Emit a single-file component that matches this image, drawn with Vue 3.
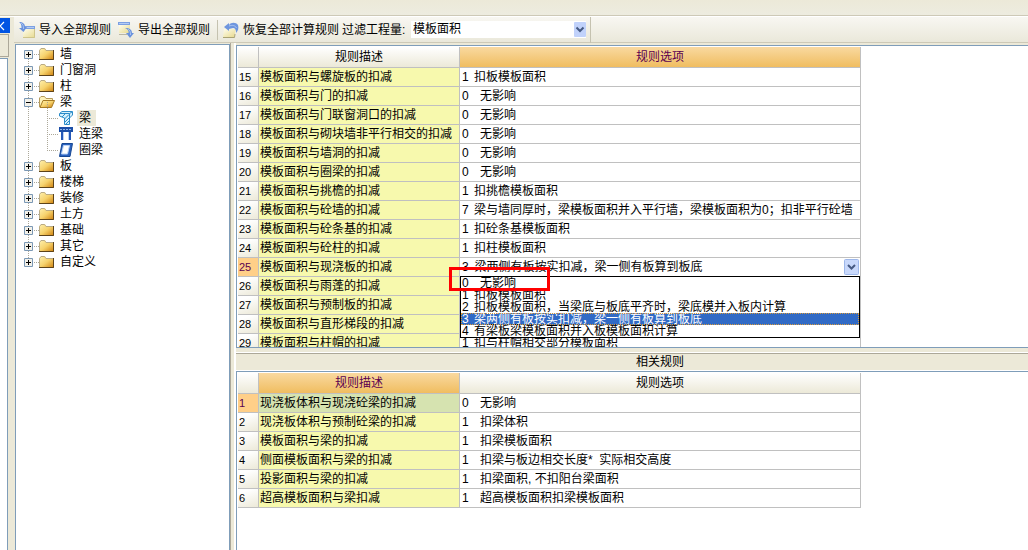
<script setup>
import { ref } from 'vue'

const tree = [
  { name: '墙' },
  { name: '门窗洞' },
  { name: '柱' },
  {
    name: '梁',
    open: true,
    children: [
      { name: '梁', icon: 'beam', selected: true },
      { name: '连梁', icon: 'link' },
      { name: '圈梁', icon: 'ring' }
    ]
  },
  { name: '板' },
  { name: '楼梯' },
  { name: '装修' },
  { name: '土方' },
  { name: '基础' },
  { name: '其它' },
  { name: '自定义' }
]

const rules = [
  { id: 15, desc: '模板面积与螺旋板的扣减', code: 1, text: '扣板模板面积' },
  { id: 16, desc: '模板面积与门的扣减', code: 0, wide: true, text: '无影响' },
  { id: 17, desc: '模板面积与门联窗洞口的扣减', code: 0, wide: true, text: '无影响' },
  { id: 18, desc: '模板面积与砌块墙非平行相交的扣减', code: 0, wide: true, text: '无影响' },
  { id: 19, desc: '模板面积与墙洞的扣减', code: 0, wide: true, text: '无影响' },
  { id: 20, desc: '模板面积与圈梁的扣减', code: 0, wide: true, text: '无影响' },
  { id: 21, desc: '模板面积与挑檐的扣减', code: 1, text: '扣挑檐模板面积' },
  { id: 22, desc: '模板面积与砼墙的扣减', code: 7, text: '梁与墙同厚时，梁模板面积并入平行墙，梁模板面积为0；扣非平行砼墙' },
  { id: 23, desc: '模板面积与砼条基的扣减', code: 1, text: '扣砼条基模板面积' },
  { id: 24, desc: '模板面积与砼柱的扣减', code: 1, text: '扣柱模板面积' },
  { id: 25, desc: '模板面积与现浇板的扣减', editing: true },
  { id: 26, desc: '模板面积与雨蓬的扣减' },
  { id: 27, desc: '模板面积与预制板的扣减' },
  { id: 28, desc: '模板面积与直形梯段的扣减' },
  { id: 29, desc: '模板面积与柱帽的扣减', code: 1, text: '扣与柱帽相交部分模板面积' }
]

const options = [
  { code: 0, wide: true, text: '无影响' },
  { code: 1, text: '扣板模板面积' },
  { code: 2, text: '扣板模板面积，当梁底与板底平齐时，梁底模并入板内计算' },
  { code: 3, text: '梁两侧有板按实扣减，梁一侧有板算到板底' },
  { code: 4, text: '有梁板梁模板面积并入板模板面积计算' }
]

const related = [
  { id: 1, desc: '现浇板体积与现浇砼梁的扣减', code: 0, text: '无影响' },
  { id: 2, desc: '现浇板体积与预制砼梁的扣减', code: 1, text: '扣梁体积' },
  { id: 3, desc: '模板面积与梁的扣减', code: 1, text: '扣梁模板面积' },
  { id: 4, desc: '侧面模板面积与梁的扣减', code: 1, text: '扣梁与板边相交长度*\u00a0\u00a0实际相交高度' },
  { id: 5, desc: '投影面积与梁的扣减', code: 1, text: '扣梁面积,\u00a0不扣阳台梁面积' },
  { id: 6, desc: '超高模板面积与梁扣减', code: 1, text: '超高模板面积扣梁模板面积' }
]

const quantity = ref('模板面积')
const chosen = ref(3)
</script>

<template>
  <div class="app">
    <svg class="defs" aria-hidden="true">
      <defs>
        <linearGradient id="gold" x1="0" y1="0" x2="1" y2="1">
          <stop offset="0" stop-color="#fff3b4" />
          <stop offset="0.5" stop-color="#f6d26c" />
          <stop offset="1" stop-color="#cc7c08" />
        </linearGradient>
        <linearGradient id="sheet" x1="0" y1="0" x2="1" y2="1">
          <stop offset="0" stop-color="#fffdee" />
          <stop offset="1" stop-color="#e6d98c" />
        </linearGradient>
      </defs>
    </svg>
    <div class="top-strip"></div>
    <div class="main">
      <aside class="dock">
        <button class="dock-close" aria-label="收起">
          <svg width="10" height="15" viewBox="0 0 10 15"><path d="M4 4L0 8L4 12" fill="none" stroke="#fff" stroke-width="1.2" /></svg>
        </button>
        <div class="dock-tab"></div>
        <div class="dock-body"></div>
      </aside>
      <div class="work">
        <div class="toolbar">
          <button class="tool">
            <svg width="16" height="16" viewBox="0 0 16 16">
              <path d="M4 7H16V16H4Z" fill="url(#sheet)" />
              <path d="M4 15.500H15.500V7" fill="none" stroke="#cfc58c" />
              <path d="M4 4H16V7H4Z" fill="#7ca0e2" />
              <path d="M6 5H15V6H6Z" fill="#b4cbf4" />
              <path d="M0 0C4 0 6 2 6 5H8L4.500 10L0 6H2.500C2.500 3 2 1 0 0Z" fill="#6a92dd" />
              <path d="M2 1C4 2 4.500 4 4.500 7" fill="none" stroke="#a9c4f2" />
            </svg>
            <span>导入全部规则</span>
          </button>
          <button class="tool">
            <svg width="16" height="16" viewBox="0 0 16 16">
              <path d="M1 3H12V11H1Z" fill="url(#sheet)" />
              <path d="M0 0H12V3H0Z" fill="#7ca0e2" />
              <path d="M1 1H11V2H1Z" fill="#b4cbf4" />
              <path d="M1 12.500H9" stroke="#b9b6a4" />
              <path d="M7 6C12 6 14 8 14 11H16L12 16L8 11H10.500C11 9 10 7 7 6Z" fill="#6a92dd" />
              <path d="M10 7C12 8 12.500 10 12.500 13" fill="none" stroke="#a9c4f2" />
            </svg>
            <span>导出全部规则</span>
          </button>
          <span class="divider"></span>
          <button class="tool last">
            <svg width="16" height="16" viewBox="0 0 16 16">
              <path d="M1 7H13L11 15H0Z" fill="url(#sheet)" />
              <path d="M0 15.500H11.500L12 12" fill="none" stroke="#a9a274" />
              <path d="M1 5L6 1V3C8 0 13 0 15 3C16 6 15 9 13 11C13.500 8 12 6 10 6L6 7V9Z" fill="#6f96de" />
              <path d="M6 4C9 3 12 3 13.500 6" fill="none" stroke="#a9c4f2" />
            </svg>
            <span>恢复全部计算规则</span>
          </button>
          <label class="filter-label" for="quantity">过滤工程量:</label>
          <div class="filter">
            <select id="quantity" v-model="quantity">
              <option>模板面积</option>
            </select>
            <svg class="arrow" viewBox="0 0 12 15" width="12" height="15">
              <rect width="12" height="15" rx="1" fill="#c1d2fb" />
              <path d="M2.500 5.500L6 9L9.500 5.500" fill="none" stroke="#465a83" stroke-width="2" />
            </svg>
          </div>
        </div>
        <div class="content">
          <nav class="tree" aria-label="构件">
            <ul>
              <li v-for="node in tree" :key="node.name" class="node">
                <div class="line">
                  <svg width="9" height="9" viewBox="0 0 9 9">
                    <path d="M.5 .5H8.500V8.500H.5Z" fill="#f3f1e9" stroke="#7b98b5" />
                    <path :d="node.open ? 'M2 4.500H7' : 'M2 4.500H7M4.500 2V7'" stroke="#000" />
                  </svg>
                  <span class="dots"></span>
                  <svg v-if="node.open" width="16" height="12" viewBox="0 0 16 12">
                    <path d="M.5 11V2L2 .5H5.500L7 2.500H13.500V5" fill="#fff3ba" stroke="#b59a5c" />
                    <path d="M1 11.500L4 4.500H15.500L12.500 11.500Z" fill="url(#gold)" stroke="#a57a24" />
                  </svg>
                  <svg v-else width="16" height="12" viewBox="0 0 16 12">
                    <path d="M0 2H1L2 0H6L7 2H15V12H0Z" fill="url(#gold)" />
                    <path d="M.5 11V2.500L2 .5H5.500L7 2.500H14" fill="none" stroke="#b9ab86" />
                    <path d="M0 11.500H14.500V2" fill="none" stroke="#5c431a" />
                  </svg>
                  <span class="name">{{ node.name }}</span>
                </div>
                <ul v-if="node.children" class="children">
                  <li v-for="child in node.children" :key="child.name" class="child">
                    <span class="child-dots"></span>
                    <svg v-if="child.icon === 'beam'" width="14" height="14" viewBox="0 0 14 14">
                      <path d="M.5 2.500L3 .5H13.500V4L10.500 7V13.500H5.500V7L.5 5Z" fill="#d6f1fc" stroke="#2c8cc9" />
                      <path d="M1 2.500H10.500L13 1M10.500 2.500V7M3 6L6 3M5.500 8L10 3.500M6 11L10 7M7 13L10 10" fill="none" stroke="#2c8cc9" />
                    </svg>
                    <svg v-else-if="child.icon === 'link'" width="14" height="14" viewBox="0 0 14 14">
                      <path d="M0 0H14V5H0Z" fill="#1c4fa8" />
                      <path d="M1 2.500H13" stroke="#8fb6ec" stroke-dasharray="2 1" />
                      <path d="M3 5V13M11 5V13" stroke="#2558b8" stroke-width="2" />
                      <path d="M4.500 5V13M9.500 5V13" stroke="#b9d2f5" />
                    </svg>
                    <svg v-else width="14" height="14" viewBox="0 0 14 14">
                      <path d="M3 .5H13.500L11 13.500H.5Z" fill="#2b62bf" stroke="#174792" />
                      <path d="M4.500 2.500H10.500L8.500 11H2.500Z" fill="#fff" stroke="#b9d2f5" />
                    </svg>
                    <span class="name" :class="{ selected: child.selected }">{{ child.name }}</span>
                  </li>
                </ul>
              </li>
            </ul>
          </nav>
          <div class="splitter"></div>
          <section class="panes">
            <div class="pane">
              <table class="grid">
                <colgroup><col class="c-id" /><col class="c-desc" /><col class="c-opt" /></colgroup>
                <thead>
                  <tr><th></th><th>规则描述</th><th class="active">规则选项</th></tr>
                </thead>
                <tbody>
                  <tr v-for="row in rules" :key="row.id">
                    <th scope="row" :class="{ current: row.editing }">{{ row.id }}</th>
                    <td class="desc">{{ row.desc }}</td>
                    <td v-if="row.editing" class="editor">
                      <select v-model="chosen" :aria-label="row.desc">
                        <option v-for="o in options" :key="o.code" :value="o.code">{{ o.code + '\u00a0\u2009' + o.text }}</option>
                      </select>
                      <svg class="arrow" viewBox="0 0 15 16" width="15" height="16">
                        <rect x=".5" y=".5" width="14" height="15" rx="1" fill="#c8d8fb" stroke="#9db7ea" />
                        <path d="M4 6L7.500 9.500L11 6" fill="none" stroke="#465a83" stroke-width="2" />
                      </svg>
                      <ul class="popup" role="listbox">
                        <li v-for="o in options" :key="o.code" role="option" :aria-selected="o.code === chosen" :class="{ chosen: o.code === chosen }">
                          <span class="code" :class="{ wide: o.wide }">{{ o.code }}</span>{{ o.text }}
                        </li>
                      </ul>
                      <div class="mark"></div>
                    </td>
                    <td v-else><span class="code" :class="{ wide: row.wide }">{{ row.code }}</span>{{ row.text }}</td>
                  </tr>
                </tbody>
              </table>
            </div>
            <h2 class="caption">相关规则</h2>
            <div class="pane">
              <table class="grid">
                <colgroup><col class="c-id" /><col class="c-desc" /><col class="c-opt" /></colgroup>
                <thead>
                  <tr><th></th><th class="active">规则描述</th><th>规则选项</th></tr>
                </thead>
                <tbody>
                  <tr v-for="row in related" :key="row.id">
                    <th scope="row" :class="{ current: row.id === 1 }">{{ row.id }}</th>
                    <td class="desc" :class="{ focus: row.id === 1 }">{{ row.desc }}</td>
                    <td><span class="code wide">{{ row.code }}</span>{{ row.text }}</td>
                  </tr>
                </tbody>
              </table>
            </div>
          </section>
        </div>
      </div>
    </div>
  </div>
</template>

<style>
body {
  background: #ece9d8;
}
</style>

<style scoped>
* {
  box-sizing: border-box;
}
.app {
  display: flex;
  flex-direction: column;
  height: 100vh;
  overflow: hidden;
  background: #ece9d8;
  color: #000;
  font: 12px/16px "Liberation Sans", "Noto Sans CJK SC", sans-serif;
  white-space: nowrap;
}
.defs {
  position: absolute;
  width: 0;
  height: 0;
}
ul {
  list-style: none;
  margin: 0;
  padding: 0;
}
svg {
  flex: none;
  display: block;
}
button,
select {
  font: inherit;
  color: inherit;
  border: 0;
  padding: 0;
  margin: 0;
  background: none;
}
select {
  appearance: none;
  width: 100%;
  outline: none;
}
.top-strip {
  flex: none;
  height: 17px;
  background: linear-gradient(#ece9d8, #edece0);
  border-bottom: 1px solid #fff;
  box-shadow: inset 0 -1px #cdc9b7;
}
.main {
  flex: 1;
  min-height: 0;
  display: flex;
}
.dock {
  flex: none;
  width: 14px;
  display: flex;
  flex-direction: column;
  padding-top: 1px;
}
.dock-close {
  width: 10px;
  height: 15px;
  background: #0054e3;
  overflow: hidden;
}
.dock-tab {
  height: 23px;
  width: 9px;
  margin-top: 1px;
  border: 1px solid #aca899;
  border-left: 0;
}
.dock-body {
  flex: 1;
  width: 8px;
  margin-top: 1px;
  background: #fff;
  border: 1px solid #7f9db9;
  border-width: 1px 1px 0 0;
}
.work {
  flex: 1;
  min-width: 0;
  display: flex;
  flex-direction: column;
}
.toolbar {
  flex: none;
  height: 26px;
  display: flex;
  align-items: center;
  padding-left: 5px;
  background: linear-gradient(#f8f7f2, #eae8da);
  border-bottom: 1px solid #cdc9b7;
}
.tool {
  display: flex;
  align-items: center;
  gap: 4px;
  margin-right: 7px;
}
.divider {
  width: 1px;
  height: 20px;
  margin-right: 5px;
  background: #c5c2b0;
}
.tool.last {
  margin-right: 3px;
}
.filter-label {
  width: 69px;
}
.filter {
  position: relative;
  width: 180px;
  height: 26px;
  padding: 4px 4px 5px 0;
  border-right: 1px solid #c5c2b0;
}
.filter select {
  display: block;
  height: 17px;
  padding: 0 0 3px 2px;
  background: #fff;
}
.arrow {
  position: absolute;
  pointer-events: none;
}
.filter .arrow {
  top: 5px;
  right: 4px;
}
.content {
  flex: 1;
  min-height: 0;
  display: flex;
}
.tree {
  flex: none;
  width: 215px;
  margin: 1px 0 0 1px;
  padding: 1px 0 0 8px;
  background: #fff;
  border: 1px solid #7f9db9;
  border-bottom: 0;
}
.node {
  position: relative;
}
.node:not(:last-child)::before {
  content: "";
  position: absolute;
  left: 4px;
  top: 13px;
  bottom: -4px;
  width: 1px;
  background: repeating-linear-gradient(#aca899 0 1px, transparent 1px 2px);
}
.line {
  display: flex;
  align-items: center;
  height: 16px;
}
.dots {
  width: 6px;
  height: 1px;
  background: repeating-linear-gradient(90deg, transparent 0 1px, #aca899 1px 2px);
}
.line .name {
  margin-left: 5px;
}
.children {
  margin-left: 23px;
}
.child {
  position: relative;
  display: flex;
  align-items: center;
  height: 16px;
}
.child::before {
  content: "";
  position: absolute;
  left: 0;
  top: -8px;
  height: 16px;
  width: 1px;
  background: repeating-linear-gradient(#aca899 0 1px, transparent 1px 2px);
}
.child-dots {
  width: 12px;
  height: 1px;
  background: repeating-linear-gradient(90deg, #aca899 0 1px, transparent 1px 2px);
}
.child .name {
  margin-left: 4px;
  padding: 0 5px 0 2px;
}
.child .selected {
  background: #ece9d8;
}
.splitter {
  flex: none;
  width: 6px;
  border-left: 1px solid #aca899;
  border-right: 2px solid #fff;
}
.panes {
  flex: 1;
  min-width: 0;
  margin-top: 2px;
  display: grid;
  grid-template-columns: minmax(0, 1fr);
  grid-template-rows: minmax(0, 303fr) auto minmax(0, 179fr);
}
.pane {
  overflow: hidden;
  padding: 1px 0 0 1px;
  background: #fff;
  border: 1px solid #7f9db9;
  border-right: 0;
}
.pane:last-child {
  border-bottom: 0;
}
.caption {
  margin: 5px 0 0;
  height: 18px;
  padding-left: 400px;
  border-top: 1px solid #aca899;
  border-bottom: 1px solid #fff;
  box-shadow: 0 -1px #fff;
  font: inherit;
}
.grid {
  table-layout: fixed;
  width: 623px;
  border-collapse: separate;
  border-spacing: 0;
}
.c-id {
  width: 21px;
}
.c-desc {
  width: 201px;
}
.c-opt {
  width: 401px;
}
.grid th,
.grid td {
  height: 19px;
  padding: 0 0 0 1px;
  border-right: 1px solid #c0c0c0;
  border-bottom: 1px solid #c0c0c0;
  font-weight: normal;
  line-height: 18px;
  text-align: left;
}
.grid thead th {
  height: 21px;
  padding: 0;
  text-align: center;
  background: linear-gradient(#fff, #ece9d8);
}
.grid thead th.active {
  background: linear-gradient(#f9d9a0, #f0bd60);
  color: #5a0050;
}
.grid tbody th {
  font-size: 11px;
  background: linear-gradient(160deg, #fff 20%, #ece9d8);
}
.grid tbody th.current {
  background: #ffcf88;
  color: #5a0050;
}
.grid .desc {
  background: #f7f9ad;
}
.grid .focus {
  background: #d6e3b0;
}
.code {
  display: inline-block;
  width: 12px;
}
.grid td > .code {
  margin-left: 1px;
}
.code.wide {
  width: 18px;
}
.grid .editor {
  position: relative;
  padding: 0;
}
.editor select {
  display: block;
  height: 18px;
  padding: 0 18px 0 2px;
}
.editor .arrow {
  top: 1px;
  right: 1px;
}
.popup {
  position: absolute;
  z-index: 1;
  top: 18px;
  left: 0;
  right: 0;
  background: #fff;
  border: 1px solid #000;
}
.popup li {
  height: 12px;
  padding-left: 1px;
  line-height: 12px;
}
.popup .chosen {
  background: #316ac5;
  color: #fff;
  outline: 1px dotted #d99a3a;
  outline-offset: -1px;
}
.mark {
  position: absolute;
  z-index: 2;
  top: 9px;
  left: -11px;
  width: 101px;
  height: 24px;
  border: 3px solid #f00;
  pointer-events: none;
}
</style>
